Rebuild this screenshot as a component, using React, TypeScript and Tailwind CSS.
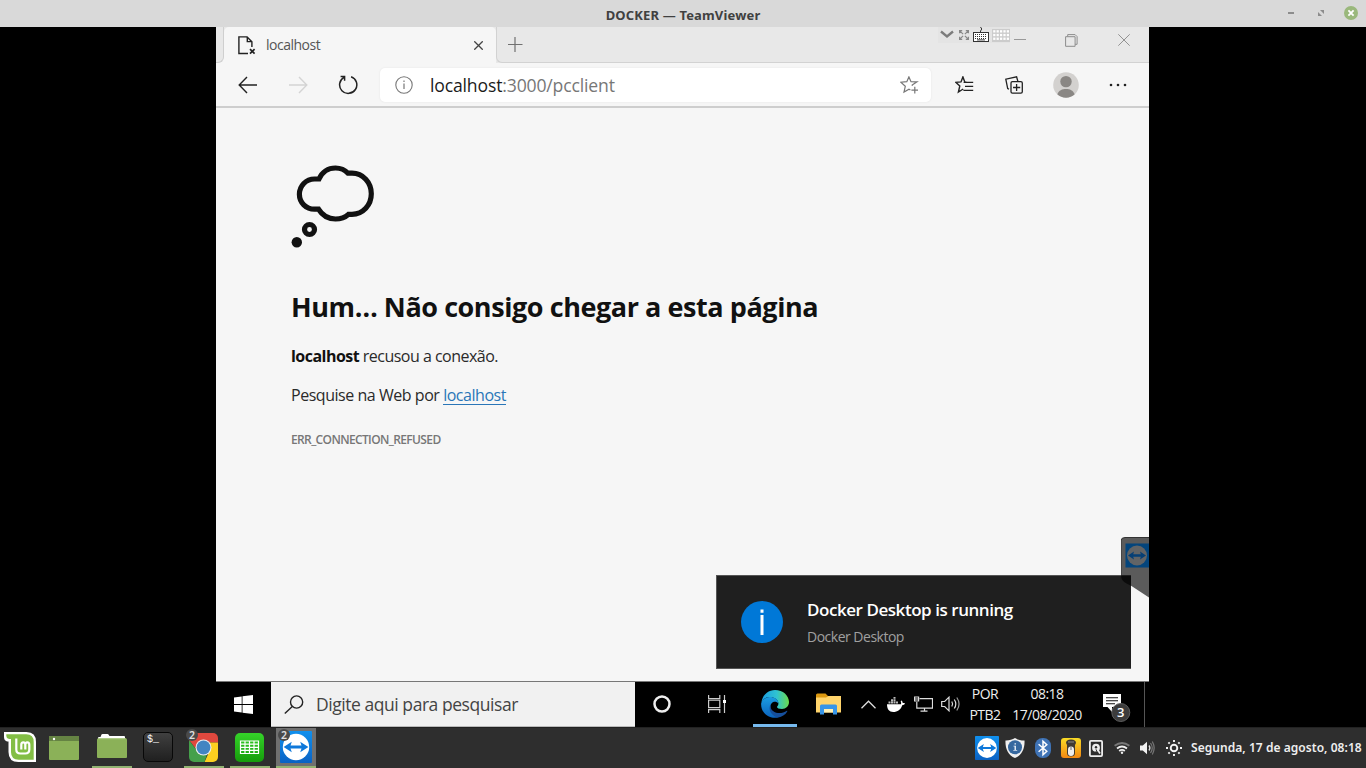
import React from "react";

type P = { className?: string };

const segoe = "font-['Open_Sans','Noto_Sans',sans-serif]";

function Arrows({ id }: { id: string }) {
  return (
    <svg viewBox="0 0 32 32" className="block h-full w-full">
      <defs>
        <linearGradient id={id} x1="0" y1="0" x2="0" y2="1">
          <stop offset="0" stopColor="#1090ee" />
          <stop offset="1" stopColor="#0a62c4" />
        </linearGradient>
      </defs>
      <rect width="32" height="32" rx="1" fill={`url(#${id})`} />
      <circle cx="16" cy="16" r="13.2" fill="#fff" />
      <path d="M3.6 16l8.2-5.2-1.3 3.8h11l-1.3-3.8 8.2 5.2-8.2 5.2 1.3-3.8h-11l1.3 3.8z" fill="#0e78da" />
    </svg>
  );
}

function TitleBar() {
  return (
    <header className="grid h-[27px] shrink-0 grid-cols-[1fr_auto_1fr] items-center bg-[#d9d9d9]">
      <span />
      <h1 className="pt-[2px] text-[13px] leading-[20px] font-bold tracking-[0.16px] text-[#404040]">DOCKER — TeamViewer</h1>
      <div className="flex items-center justify-end pr-[8px]">
        <svg className="mr-[24px] h-[14px] w-[6px]" viewBox="0 0 6 14"><path d="M0 5h6v2H0z" fill="#8c8c8c" /></svg>
        <svg className="mr-[20px] mb-px h-[6px] w-[6px]" viewBox="0 0 6 6"><path d="M2 0h4v4zM0 2v4h4z" fill="#8c8c8c" /></svg>
        <svg className="mb-px h-[14px] w-[14px]" viewBox="0 0 14 14">
          <circle cx="7" cy="7" r="7" fill="#9ab87c" />
          <path d="M4.4 4.4l5.2 5.2M9.6 4.4L4.4 9.6" stroke="#fff" strokeWidth="1.8" />
        </svg>
      </div>
    </header>
  );
}

function TabStrip() {
  const keys = [];
  for (let y = 0; y < 3; y++) for (let x = 0; x < 6; x++) keys.push(<rect key={`${x}-${y}`} x={2 + x * 2} y={7 + y * 2} width="1" height="1" fill="#333" />);
  const dots = [];
  for (let y = 0; y < 3; y++) for (let x = 0; x < 5; x++) dots.push(<rect key={`${x}-${y}`} x={1.2 + x * 3.4} y={1.2 + y * 3.7} width="2.2" height="2.3" fill="#fff" />);
  return (
    <div className="flex h-[36px] items-start bg-[#e8e8e8]">
      <div className="h-[36px] w-[8px] shrink-0 bg-[#f6f6f6]">
        <div className="h-[36px] w-[8px] rounded-br-[6px] border-r border-b border-[#cfcfcf] bg-[#e8e8e8]" />
      </div>
      <div className="flex h-[36px] w-[272px] shrink-0 items-center rounded-t-[5px] bg-[#f6f6f6] pl-[14px]">
        <svg className="h-[19px] w-[18px]" viewBox="0 0 18 19" fill="none" stroke="#222" strokeWidth="1.4">
          <path d="M10 17.5H.9V.9h8.2l4.8 4.8v5.2" />
          <path d="M9.3 1v4.6h4.5" />
          <path d="M12 13.2l4.6 4.4M16.6 13.2L12 17.6" strokeWidth="1.7" />
        </svg>
        <span className={`${segoe} -mt-px ml-[10px] grow text-[14px] tracking-[-0.5px] text-[#555]`}>localhost</span>
        <svg className="mt-[1px] mr-[13px] h-[9px] w-[9px]" viewBox="0 0 9 9"><path d="M.3.3l8.4 8.4M8.7.3L.3 8.7" stroke="#444" strokeWidth="1.3" /></svg>
      </div>
      <div className="flex h-[36px] grow items-start rounded-bl-[6px] border-b border-l border-[#d2d2d2]">
        <svg className="mt-[10px] ml-[11px] h-[15px] w-[15px]" viewBox="0 0 15 15"><path d="M7 0v15M0 7.5h14.5" stroke="#707070" strokeWidth="1.2" /></svg>
        <div className="ml-[415px] flex h-[16px] items-start bg-[#e4e4e4]">
          <svg className="mt-[3px] ml-[2px] h-[8px] w-[14px]" viewBox="0 0 14 8" fill="none"><path d="M1 1.5l6 5 6-5" stroke="#7c7c7c" strokeWidth="2.3" /></svg>
          <svg className="mt-[3px] ml-[5px] h-[10px] w-[10px]" viewBox="0 0 10 10" fill="none" stroke="#888" strokeWidth="1.2">
            <path d="M.6 3.2V.6h2.6M.8.8l3.3 3.3M6.8.6h2.6v2.6M9.2.8L5.9 4.1M.6 6.8v2.6h2.6M.8 9.2l3.3-3.3M9.4 6.8v2.6H6.8M9.2 9.2L5.9 5.9" />
          </svg>
          <svg className="mt-[0px] ml-[4px] h-[15px] w-[16px]" viewBox="0 0 16 15">
            <path d="M7.5 0l1.3 2-1.3 2v1" fill="none" stroke="#333" />
            <rect x=".5" y="5.5" width="15" height="9" fill="#fff" stroke="#333" />
            {keys}
            <path d="M4 12.9h8" stroke="#333" />
          </svg>
          <svg className="mt-[2px] ml-[3px] h-[13px] w-[18px]" viewBox="0 0 18 13">
            <rect width="18" height="13" fill="#ccc" />
            {dots}
          </svg>
        </div>
        <svg className="mt-[12px] ml-[4px] h-[1px] w-[12px]" viewBox="0 0 12 1"><rect width="12" height="1" fill="#999" /></svg>
        <svg className="mt-[7px] ml-[39px] h-[13px] w-[13px]" viewBox="0 0 13 13" fill="none" stroke="#8d8d8d">
          <path d="M.6 2.7h9.5v9.6H.6zM2.7 2.5V.6h7.4l2 2v7.7h-2" />
        </svg>
        <svg className="mt-[7px] ml-[40px] h-[12px] w-[12px]" viewBox="0 0 12 12"><path d="M.3.3l11.4 11.4M11.7.3L.3 11.7" stroke="#929292" /></svg>
      </div>
    </div>
  );
}

function Toolbar() {
  return (
    <div className="flex h-[45px] items-center border-b-2 border-[#cecece] bg-[#f6f6f6]">
      <svg className="ml-[22px] h-[18px] w-[20px]" viewBox="0 0 20 18" fill="none" stroke="#222" strokeWidth="1.4"><path d="M19 9H1.5M9 1L1.2 9 9 17" /></svg>
      <svg className="ml-[30px] h-[18px] w-[20px]" viewBox="0 0 20 18" fill="none" stroke="#d4d4d4" strokeWidth="1.4"><path d="M1 9h17.5M11 1l7.8 8-7.8 8" /></svg>
      <svg className="ml-[30px] h-[20px] w-[20px]" viewBox="0 0 20 20" fill="none" stroke="#222" strokeWidth="1.5">
        <path d="M13.1 1.7A8.6 8.6 0 1 1 6 2.3M2.6 1.5h4v4.3" />
      </svg>
      <div className="mt-px ml-[22px] flex h-[34px] w-[551px] items-center rounded-[5px] bg-white pl-[15px] shadow-[0_0_2px_#e2e2e2]">
        <svg className="h-[18px] w-[18px]" viewBox="0 0 18 18" fill="none" stroke="#777">
          <circle cx="9" cy="9" r="8.2" strokeWidth="1.1" />
          <path d="M9 7.5v5.6M9 4.6v1.5" strokeWidth="1.2" />
        </svg>
        <span className={`${segoe} ml-[17px] grow text-[17.6px] tracking-[-0.16px] text-[#777]`}><span className="text-[#1b1b1b]">localhost</span>:3000/pcclient</span>
        <svg className="mr-[12px] h-[18px] w-[19px]" viewBox="0 0 19 18" fill="none" stroke="#777" strokeWidth="1.2">
          <path d="M12.4 9.8l-.2-.8L17 5.8l-6-.1L8.9.9 6.8 5.7l-6 .5 4.5 4.1-1.3 5.8L9 13.2l1.4.8M14.8 10.8v6.6M11.4 14.1H18" />
        </svg>
      </div>
      <svg className="ml-[24px] h-[18px] w-[19px]" viewBox="0 0 19 18" fill="none" stroke="#222" strokeWidth="1.4">
        <path d="M11.4 6.2L9.8 5.9 7.9.9 6 5.9l-5.2.4 4 3.6-1.4 6.2 4.8-3.1M8.6 6.4h9.6M10 10.4h8.2M8.4 14.4h9.8" />
      </svg>
      <svg className="ml-[31px] h-[18px] w-[18px]" viewBox="0 0 18 18" fill="none" stroke="#222" strokeWidth="1.3">
        <rect x="6" y="5.7" width="11.3" height="11.5" rx="1.4" />
        <path d="M11.6 8v7M8 11.5h7.2M4 13.2l-1.3-.6L.8 3.2l10.8-2.4 1.3 4.7" />
      </svg>
      <svg className="ml-[30px] h-[26px] w-[26px]" viewBox="0 0 26 26">
        <circle cx="13" cy="13" r="12.8" fill="#d3d1cf" />
        <circle cx="13" cy="9.6" r="5.7" fill="#8a8784" />
        <path d="M4.3 22.3c1.7-4 4.8-5.3 8.7-5.3s7 1.3 8.7 5.3a12.8 12.8 0 0 1-17.4 0z" fill="#8a8784" />
      </svg>
      <svg className="ml-[30px] h-[4px] w-[18px]" viewBox="0 0 18 4" fill="#222"><circle cx="2" cy="2" r="1.3" /><circle cx="9" cy="2" r="1.3" /><circle cx="16" cy="2" r="1.3" /></svg>
    </div>
  );
}

function ErrorPage() {
  return (
    <main className={`${segoe} flex grow flex-col items-start bg-[#f6f6f6] pl-[75px] text-[#2a2a2a]`}>
      <svg className="mt-[57px] h-[83px] w-[84px] shrink-0" viewBox="0 0 84 83" fill="none" stroke="#111" strokeWidth="5.2">
        <path d="M28 14C31 7.500 37 3 44.500 3c5 0 9.500 2 12.500 5.200H61C72 8.200 80.300 17.500 80.300 28.800S72 49.300 61 49.300H57.500C54 52.500 50 54 44.500 54 37 54 31 50 27.500 44.200H23.500C15 44.200 8.400 37.500 8.400 29.200S15 14 23.500 14z" />
        <circle cx="18.500" cy="64.500" r="5" />
        <circle cx="5.800" cy="77.300" r="5.200" fill="#111" stroke="none" />
      </svg>
      <h2 className="mt-[40px] text-[27px] leading-[38px] font-bold tracking-[-0.43px] whitespace-nowrap text-[#111]">Hum… Não consigo chegar a esta página</h2>
      <p className="mt-[19px] text-[16px] leading-[22px] tracking-[-0.52px]"><strong className="font-bold text-[#111]">localhost</strong> recusou a conexão.</p>
      <p className="mt-[17px] text-[16px] leading-[22px] tracking-[-0.46px]">Pesquise na Web por <a className="inline-block h-[21px] border-b border-[#2a76b8] leading-[22px] text-[#2a76b8]">localhost</a></p>
      <p className="mt-[26px] text-[12px] leading-[16px] font-semibold tracking-[-0.63px] text-[#777]">ERR_CONNECTION_REFUSED</p>
    </main>
  );
}

function Toast() {
  return (
    <aside className={`${segoe} absolute top-[548px] left-[500px] flex h-[94px] w-[415px] border-y border-l border-[#555] bg-[#1f1f1f] pl-[24px]`}>
      <svg className="mt-[25px] h-[42px] w-[42px]" viewBox="0 0 42 42">
        <circle cx="21" cy="21" r="21" fill="#0078d7" />
        <path d="M19.500 8.500h3v3.200h-3zM19.500 14h3v20h-3z" fill="#fff" />
      </svg>
      <div className="ml-[24px] pt-[22px]">
        <p className="text-[17px] leading-[24px] font-semibold tracking-[-0.45px] text-white">Docker Desktop is running</p>
        <p className="mt-[5px] text-[14px] leading-[20px] tracking-[-0.5px] text-[#a0a0a0]">Docker Desktop</p>
      </div>
    </aside>
  );
}

function SideTab() {
  return (
    <svg className="absolute top-[510px] left-[905px] h-[61px] w-[28px]" viewBox="0 0 28 61">
      <path d="M4 .5h24V60.500L10.500 49l-5-2.500Q0 44 0 38V4Q0 .5 4 .5z" fill="#000" fillOpacity=".63" />
      <path d="M0 38V4Q0 .5 4 .5h24" fill="none" stroke="#333" />
      <path d="M4.500 6.500H28v24H4.500z" fill="#04457c" />
      <circle cx="16" cy="18.500" r="10" fill="#626466" />
      <path d="M7 18.500l6-4-.8 2.800h7.600L19 14.500l6 4-6 4 .8-2.800h-7.600l.8 2.800z" fill="#063f75" />
    </svg>
  );
}

function WindowsTaskbar() {
  return (
    <div className={`${segoe} flex h-[46px] shrink-0 items-center border-t border-[#777] bg-black`}>
      <div className="flex w-[55px] shrink-0 pl-[18px]">
        <svg className="h-[19px] w-[19px]" viewBox="0 0 19 19" fill="#fff"><path d="M0 2.500l7.700-1.100V9H0zM8.500 1.200L19 0v9H8.500zM0 9.900h7.700v7.600L0 16.500zM8.500 9.900H19V19L8.500 17.700z" /></svg>
      </div>
      <div className="flex h-[45px] w-[364px] shrink-0 items-center border-b border-[#bbb] bg-[#f1f1f1] pl-[13px]">
        <svg className="h-[19px] w-[20px]" viewBox="0 0 20 19" fill="none" stroke="#222" strokeWidth="1.400"><circle cx="12.600" cy="7" r="6.100" /><path d="M8.300 11.400L.8 18.400" /></svg>
        <span className="ml-[12px] pt-px text-[17.5px] tracking-[-0.45px] text-[#444]">Digite aqui para pesquisar</span>
      </div>
      <svg className="mb-px ml-[18px] h-[18px] w-[18px] shrink-0" viewBox="0 0 18 18"><circle cx="9" cy="9" r="7.500" fill="none" stroke="#eee" strokeWidth="2.500" /></svg>
      <svg className="mb-px ml-[37px] h-[18px] w-[19px] shrink-0" viewBox="0 0 19 18" fill="none" stroke="#ccc" strokeWidth="1.200">
        <path d="M.6 0v3.500h11.200V0M.6 5.200h11.200v7.400H.6zM.6 18v-3.400h11.200V18M16.500 0v18" /><path d="M15 5h3v3h-3z" fill="#fff" stroke="none" />
      </svg>
      <div className="ml-[26px] flex h-[45px] w-[44px] shrink-0 flex-col items-center border-b-[3px] border-[#76b9ed] pt-[8px]">
        <svg className="h-[28px] w-[28px]" viewBox="0 0 28 28">
          <defs>
            <linearGradient id="edgeA" x1="0" y1=".2" x2="1" y2=".2"><stop offset="0" stopColor="#1b9de2" /><stop offset=".55" stopColor="#2fc3d2" /><stop offset="1" stopColor="#6bdc4c" /></linearGradient>
            <linearGradient id="edgeB" x1="0" y1="0" x2="0" y2="1"><stop offset="0" stopColor="#1b9de2" /><stop offset="1" stopColor="#0b62bd" /></linearGradient>
          </defs>
          <path d="M.5 12.500C1 5.500 7 0 14 0c8 0 14 5.600 14 12 0 4-3 7-7 7-3 0-5-1-5-2s1.400-1.300 1.400-3.600C17.400 9.600 13 7 8.800 7S2 9.500.5 12.500z" fill="url(#edgeA)" />
          <path d="M.2 13C1.500 9.500 5 7 8.800 7c4.600 0 8.600 2.700 8.600 6.400-1-1.500-3-2-4.500-1.600-3 1-4.400 4.200-3 8 1 3.200 4 6.200 7.500 7.700C8 29.500-.8 22.500.2 13z" fill="url(#edgeB)" />
          <path d="M10 13.500c-2 5 2 9 7 9.500 3.500.3 6.500-.8 8.500-2 .8-.4 1 .2.600.8-2 3.200-5.200 5.200-8.700 5.700C11 26.500 6 20 10 13.500z" fill="#164f9c" />
        </svg>
      </div>
      <svg className="mb-px ml-[19px] h-[22px] w-[25px] shrink-0" viewBox="0 0 25 22">
        <path d="M0 2Q0 .5 1.500.5h8L12 3h13v5H0z" fill="#dc9810" />
        <path d="M0 4.500h10L12.500 3H25v16.500H0z" fill="#ffd46b" />
        <path d="M4 21.500V13q0-1.500 1.500-1.500h14q1.500 0 1.500 1.500v8.500h-4V16H8v5.500z" fill="#3795e8" />
        <path d="M8 16h9v3.500H8z" fill="#fff0b5" />
      </svg>
      <svg className="mb-px ml-[20px] h-[9px] w-[15px] shrink-0" viewBox="0 0 15 9"><path d="M.5 8.200l7-7 7 7" fill="none" stroke="#ddd" strokeWidth="1.300" /></svg>
      <svg className="mt-[-1px] ml-[11px] h-[15px] w-[18px] shrink-0" viewBox="0 0 18 15" fill="#fff">
        <path d="M0 7.300h14c.3-1.500.1-2.400-.4-3l.8-.8c1 .8 1.300 1.600 1.300 2.600.8-.1 1.700 0 2.300.4-.5 1.300-1.700 1.700-2.800 1.700C14 12.500 10.500 15 6.200 15 2.200 15 0 12.300 0 7.300z" />
        <path d="M1.500 4.600h2v2h-2zM4 4.600h2v2H4zM6.500 4.600h2v2h-2zM9 4.600h2v2H9zM4 2.200h2v2H4zM6.500 2.200h2v2h-2zM6.500 0h2v1.800h-2z" fill="#bbb" />
      </svg>
      <svg className="mb-px ml-[9px] h-[16px] w-[19px] shrink-0" viewBox="0 0 19 16" fill="none" stroke="#ddd" strokeWidth="1.200">
        <path d="M5.500 2.600h13v9.600H2.800V6M10.500 12v3M6.500 15.200h7" /><path d="M.6 1h4v4h-4zM1 3h4" />
      </svg>
      <svg className="mb-px ml-[8px] h-[16px] w-[20px] shrink-0" viewBox="0 0 20 16" fill="none" stroke="#ddd" strokeWidth="1.200">
        <path d="M.7 5.500h3L8 1.200v13.600l-4.300-4.300h-3z" /><path d="M10.800 5.500q1.600 2.500 0 5M13.300 3.500q3 4.500 0 9" /><path d="M15.800 1.500q4.500 6.500 0 13" stroke="#999" />
      </svg>
      <div className="ml-[7px] w-[34px] shrink-0 text-center text-[14px] leading-[20px] tracking-[-0.5px] text-[#eee]"><p className="pb-[1px]">POR</p><p>PTB2</p></div>
      <div className="ml-[7px] w-[76px] shrink-0 text-center text-[14px] leading-[20px] tracking-[-0.5px] text-[#eee]"><p className="pb-[1px]">08:18</p><p>17/08/2020</p></div>
      <svg className="mt-[7px] ml-[18px] h-[28px] w-[29px] shrink-0" viewBox="0 0 29 28">
        <path d="M0 0h18v13h-9v5l-4.500-5H0z" fill="#fff" />
        <path d="M3 3.700h12M3 6.700h12M3 9.700h9" stroke="#111" strokeWidth="1.100" />
        <circle cx="17.800" cy="18.500" r="9" fill="#3c3c3c" stroke="#5d5d5d" />
        <text x="17.800" y="23" textAnchor="middle" fontFamily="Open Sans" fontWeight="600" fontSize="13" fill="#fff">3</text>
      </svg>
      <div className="ml-[12px] h-[45px] w-px shrink-0 bg-[#555]" />
    </div>
  );
}

function Launcher({ running, active, badge, className = "", children }: { running?: boolean; active?: boolean; badge?: boolean; className?: string; children: React.ReactNode }) {
  return (
    <div className={`relative flex h-[40px] w-[40px] shrink-0 items-center justify-center ${active ? "bg-[#707070]" : ""} ${running ? "border-b-2 border-[#92b372]" : "pb-[2px]"} ${className}`}>
      {children}
      {badge && <span className="absolute top-[1px] left-[2px] flex h-[12px] w-[12px] items-center justify-center rounded-full bg-[#4a4a4a] text-[10.5px] leading-none font-semibold text-[#e0e0e0]">2</span>}
    </div>
  );
}

function Folder({ className = "" }: P) {
  return (
    <svg className={className} viewBox="0 0 30 24">
      <path d="M1 9V4q0-1 1-1h1.500L4.500.5q.3-.5 1-.5h5q.7 0 1 .6L12.500 2H27q1 0 1 1v6z" fill="#fff" />
      <path d="M0 5.500Q0 4.500 1 4.500h28q1 0 1 1V23q0 1-1 1H1q-1 0-1-1z" fill="#8bb158" />
      <path d="M1 4.800h28" stroke="#a5c67a" />
    </svg>
  );
}

function MintPanel() {
  return (
    <footer className="flex h-[41px] shrink-0 items-center border-t border-[#222] bg-[#2e2e2e]">
      <Launcher>
        <svg className="h-[30px] w-[32px]" viewBox="0 0 32 30">
          <path d="M0 0h22.500Q32 0 32 10v20H14.500Q4.500 30 4.500 20V9.500H3Q0 8.500 0 5z" fill="#fff" />
          <path d="M2.300 2.300h20Q29.700 2.300 29.700 10v17.700h-15Q7 27.700 7 20V7H5Q2.300 6.500 2.300 4z" fill="#83be45" />
          <path d="M12.300 6.500v11q0 4 4 4h5q4 0 4-4v-4.800q0-2.400-2-2.400t-2 2.400v4.800M21.300 12.700q0-2.400-2-2.400t-2 2.400v4.800" fill="none" stroke="#fff" strokeWidth="2.200" />
        </svg>
      </Launcher>
      <Launcher className="ml-[4px]">
        <svg className="mt-px h-[24px] w-[30px]" viewBox="0 0 30 24"><rect width="30" height="24" rx="1" fill="#8bb158" /><path d="M0 0h30v5H0z" fill="#658343" /><circle cx="5" cy="3" r="1.200" fill="#fff" /></svg>
      </Launcher>
      <Launcher running className="ml-[8px]"><Folder className="mt-[-2px] h-[24px] w-[30px]" /></Launcher>
      <Launcher className="ml-[6px]">
        <div className="h-[30px] w-[30px] rounded-[5px] border border-[#080808] bg-linear-to-b from-[#404040] to-[#202020] pt-[2px] pl-[3px] font-['Liberation_Mono',monospace] text-[10px] leading-[10px] text-white">$_</div>
      </Launcher>
      <Launcher running badge className="ml-[6px]">
        <svg className="mr-px h-[29px] w-[29px]" viewBox="0 0 29 29">
          <defs><clipPath id="chr"><rect width="29" height="29" rx="5" /></clipPath></defs>
          <g clipPath="url(#chr)">
            <path d="M0 0h29v9.500H14.500L8.500 18 0 7z" fill="#e0483e" />
            <path d="M14 9.500h15V29H15.500l5-11z" fill="#fcd020" />
            <path d="M0 7l9 12 9 2.500L15.500 29H0z" fill="#45a04b" />
          </g>
          <circle cx="14.500" cy="14.500" r="8" fill="#eee" /><circle cx="14.500" cy="14.500" r="6.900" fill="#4385c2" />
        </svg>
      </Launcher>
      <Launcher running className="ml-[6px]">
        <svg className="mr-px h-[29px] w-[29px]" viewBox="0 0 29 29">
          <defs><linearGradient id="calc" x1="0" y1="0" x2="0" y2="1"><stop offset="0" stopColor="#35d329" /><stop offset="1" stopColor="#159c0b" /></linearGradient></defs>
          <rect width="29" height="29" rx="5" fill="url(#calc)" />
          <path d="M5.500 8h18v12.500h-18zM5.500 11.200h18M5.500 14.300h18M5.500 17.400h18M10 8v12.500M14.500 8v12.500M19 8v12.500" fill="none" stroke="#fff" strokeWidth="1.200" />
        </svg>
      </Launcher>
      <Launcher running active badge className="ml-[6px]"><div className="h-[32px] w-[32px]"><Arrows id="tvBig" /></div></Launcher>
      <div className="ml-auto flex items-center">
        <div className="h-[24px] w-[24px]"><Arrows id="tvSmall" /></div>
        <svg className="ml-[6px] h-[20px] w-[20px]" viewBox="0 0 20 20">
          <path d="M10 0c2.500 1.800 6 2.500 9.500 2.400C20 10 17 17.500 10 20 3 17.500 0 10 .5 2.400 4 2.500 7.500 1.800 10 0z" fill="#f0f0f0" />
          <circle cx="10" cy="9.300" r="7" fill="#36689f" />
          <path d="M9.500 5.200h1.500v1.400H9.500zM8.500 7.800H11v4.200h1.200v.8H8.300V12h1.200V8.600h-1z" fill="#dfe8f2" />
        </svg>
        <svg className="ml-[10px] h-[20px] w-[16px]" viewBox="0 0 16 20">
          <rect width="16" height="20" rx="7.500" fill="#3f73b5" />
          <path d="M3.600 6.200l8.200 7L8 16.700V3.300l3.800 3.500-8.200 7" fill="none" stroke="#fff" strokeWidth="1.500" />
        </svg>
        <svg className="ml-[10px] h-[20px] w-[20px]" viewBox="0 0 20 20">
          <defs><linearGradient id="mouse" x1="0" y1="0" x2="0" y2="1"><stop offset="0" stopColor="#f9db26" /><stop offset="1" stopColor="#f38812" /></linearGradient></defs>
          <rect width="20" height="20" rx="3" fill="url(#mouse)" />
          <path d="M5 5q0-3.500 5-3.500T15 5l-1 2v8q0 3.500-4 3.500T6 15V7z" fill="#403a32" />
          <rect x="7" y="8.500" width="6" height="9.500" rx="3" fill="#eee" /><path d="M10 9v3M7 4h6" stroke="#888" strokeWidth="1.200" />
        </svg>
        <svg className="ml-[8px] h-[17px] w-[14px]" viewBox="0 0 14 17">
          <rect x=".9" y=".9" width="12.200" height="15.200" rx="1" fill="none" stroke="#eee" strokeWidth="1.800" />
          <circle cx="7" cy="7.700" r="3.900" fill="#eee" /><circle cx="7" cy="7.300" r="1.200" fill="#2e2e2e" /><path d="M7 9.300l1.500 3.500" stroke="#2e2e2e" strokeWidth="1" /><path d="M8.500 9.500l2.500 4" stroke="#eee" strokeWidth="1.600" />
        </svg>
        <svg className="ml-[11px] h-[12px] w-[16px]" viewBox="0 0 16 12" fill="none" strokeWidth="1.800">
          <path d="M.6 3.800Q8-1.800 15.400 3.800" stroke="#777" /><path d="M3 6.500q5-4 10 0" stroke="#eee" /><path d="M5.200 9q2.800-2.300 5.600 0" stroke="#eee" /><circle cx="8" cy="10.800" r="1.200" fill="#eee" />
        </svg>
        <svg className="ml-[10px] h-[14px] w-[15px]" viewBox="0 0 15 14" fill="none">
          <path d="M0 4.500h2.800L7 .8v12.400L2.800 9.500H0z" fill="#f2f2f2" /><path d="M9 4.500q1.800 2.500 0 5" stroke="#ddd" strokeWidth="1.300" /><path d="M10.500 2q3.500 5 0 10M12.300.5q3.700 6.500 0 13" stroke="#777" strokeWidth="1.200" />
        </svg>
        <svg className="ml-[11px] h-[16px] w-[16px]" viewBox="0 0 16 16" fill="none" stroke="#f2f2f2" strokeWidth="1.900">
          <circle cx="8" cy="8" r="3.300" /><path d="M8 0v2M8 14v2M0 8h2M14 8h2M2.400 2.400l1.300 1.300M12.300 12.300l1.300 1.300M2.400 13.600l1.300-1.300M12.300 3.700l1.300-1.300" />
        </svg>
        <time className="ml-[9px] w-[175px] text-[12px] leading-[18px] font-semibold tracking-[0.05px] whitespace-nowrap text-[#eee]">Segunda, 17 de agosto, 08:18</time>
      </div>
    </footer>
  );
}

export default function App() {
  return (
    <div className="flex h-[768px] w-[1366px] flex-col overflow-hidden bg-black font-['Noto_Sans',sans-serif]">
      <TitleBar />
      <div className="flex h-[700px] justify-center pr-px">
        <section className="relative flex h-[700px] w-[933px] flex-col bg-[#f6f6f6]">
          <TabStrip />
          <Toolbar />
          <ErrorPage />
          <WindowsTaskbar />
          <Toast />
          <SideTab />
        </section>
      </div>
      <MintPanel />
    </div>
  );
}
